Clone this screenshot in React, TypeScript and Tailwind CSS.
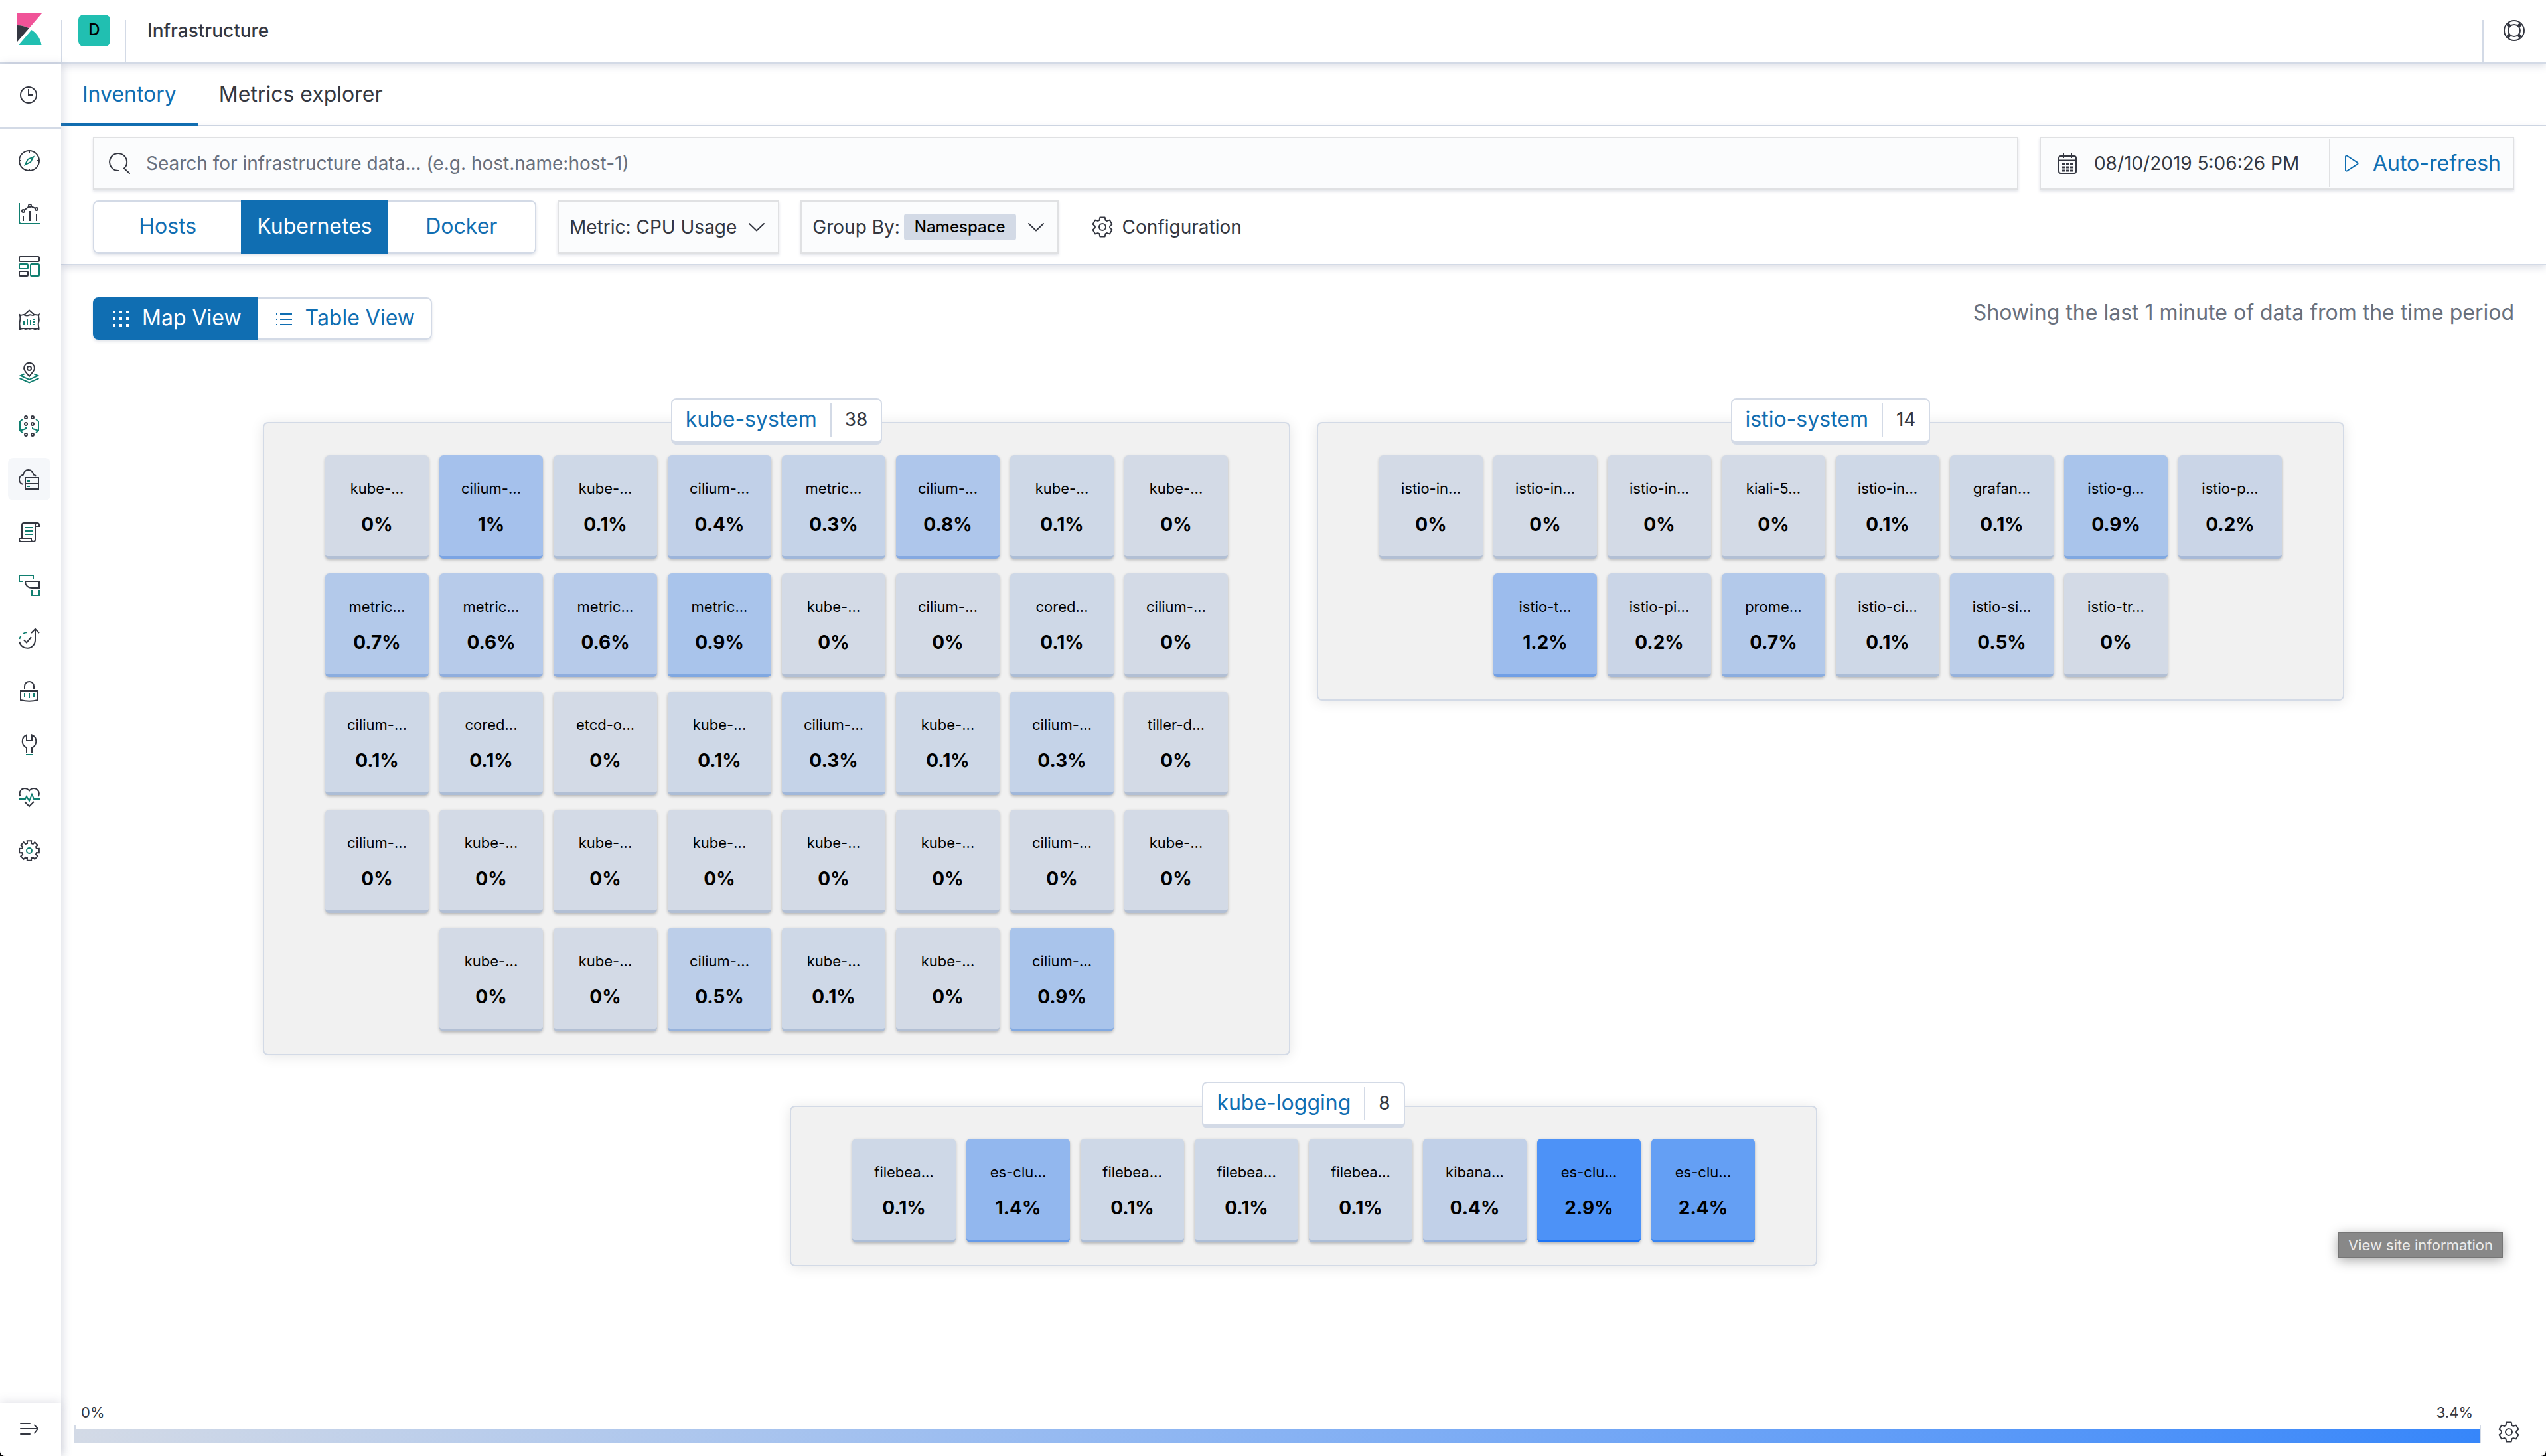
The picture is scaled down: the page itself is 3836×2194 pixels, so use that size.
import type { ReactNode } from "react";

type Pod = [name: string, value: number];

const GROUPS: { name: string; pods: Pod[] }[] = [
  {
    name: "kube-system",
    pods: [
      ["kube-...", 0], ["cilium-...", 1], ["kube-...", 0.1], ["cilium-...", 0.4], ["metric...", 0.3], ["cilium-...", 0.8], ["kube-...", 0.1], ["kube-...", 0],
      ["metric...", 0.7], ["metric...", 0.6], ["metric...", 0.6], ["metric...", 0.9], ["kube-...", 0], ["cilium-...", 0], ["cored...", 0.1], ["cilium-...", 0],
      ["cilium-...", 0.1], ["cored...", 0.1], ["etcd-o...", 0], ["kube-...", 0.1], ["cilium-...", 0.3], ["kube-...", 0.1], ["cilium-...", 0.3], ["tiller-d...", 0],
      ["cilium-...", 0], ["kube-...", 0], ["kube-...", 0], ["kube-...", 0], ["kube-...", 0], ["kube-...", 0], ["cilium-...", 0], ["kube-...", 0],
      ["kube-...", 0], ["kube-...", 0], ["cilium-...", 0.5], ["kube-...", 0.1], ["kube-...", 0], ["cilium-...", 0.9],
    ],
  },
  {
    name: "istio-system",
    pods: [
      ["istio-in...", 0], ["istio-in...", 0], ["istio-in...", 0], ["kiali-5...", 0], ["istio-in...", 0.1], ["grafan...", 0.1], ["istio-g...", 0.9], ["istio-p...", 0.2],
      ["istio-t...", 1.2], ["istio-pi...", 0.2], ["prome...", 0.7], ["istio-ci...", 0.1], ["istio-si...", 0.5], ["istio-tr...", 0],
    ],
  },
  {
    name: "kube-logging",
    pods: [
      ["filebea...", 0.1], ["es-clu...", 1.4], ["filebea...", 0.1], ["filebea...", 0.1], ["filebea...", 0.1], ["kibana...", 0.4], ["es-clu...", 2.9], ["es-clu...", 2.4],
    ],
  },
];

const MAX = 3.4;
const LOW = [211, 218, 230];
const HIGH = [54, 134, 250];

function heat(value: number) {
  return LOW.map((c, i) => Math.round(c + (HIGH[i] - c) * (value / MAX)));
}

/* Same hue and saturation with the HSL lightness lowered by ten points. */
function darken(rgb: number[]) {
  const [r, g, b] = rgb.map((c) => c / 255);
  const max = Math.max(r, g, b);
  const min = Math.min(r, g, b);
  const l = (max + min) / 2;
  const d = max - min;
  const s = d / (1 - Math.abs(2 * l - 1));
  const h = 60 * (4 + (r - g) / d);
  return `hsl(${h} ${s * 100}% ${l * 100 - 10}%)`;
}

/* Outline of a cog with flat teeth, centred in a 32 by 32 box. */
function cog(teeth: number, outer: number, inner: number, a: number, b: number, start: number) {
  const pts: string[] = [];
  for (let i = 0; i < teeth; i++) {
    const mid = start + (360 / teeth) * i;
    for (const [r, off] of [[inner, -b], [outer, -a], [outer, a], [inner, b]]) {
      const t = ((mid + off) * Math.PI) / 180;
      pts.push(`${(16 + r * Math.cos(t)).toFixed(2)} ${(16 + r * Math.sin(t)).toFixed(2)}`);
    }
  }
  return `M${pts.join("L")}Z`;
}

function Icon({ children, className = "" }: { children: ReactNode; className?: string }) {
  return (
    <svg viewBox="0 0 32 32" className={`size-8 shrink-0 ${className}`} fill="none" stroke="currentColor" strokeWidth="2" aria-hidden="true">
      {children}
    </svg>
  );
}

const TEAL = "#117f70";

const NAV: { label: string; icon: ReactNode }[] = [
  {
    label: "Discover",
    icon: (
      <>
        <circle cx="16" cy="16" r="15" />
        <path d="M16 1V4M16 28V31M1 16H4M28 16H31" />
        <path stroke={TEAL} d="M22 10.5L13.8 14L10 22L18 18.2Z" />
      </>
    ),
  },
  {
    label: "Visualize",
    icon: (
      <>
        <path stroke={TEAL} d="M1 0V28A3 3 0 0 0 4 31H32" />
        <circle cx="7" cy="12" r="2" />
        <circle cx="17" cy="4" r="2" />
        <circle cx="27" cy="9" r="2" />
        <path d="M8.7 10.7L15.4 5.3M18.7 5L25.2 8M7 20V27M17 12V27M27 17V27" />
      </>
    ),
  },
  {
    label: "Dashboard",
    icon: (
      <>
        <rect x="1" y="1" width="30" height="7" rx="1.5" />
        <rect x="1" y="23" width="13" height="7" rx="1.5" />
        <rect x="1" y="12" width="13" height="7" rx="1.5" stroke={TEAL} />
        <rect x="18" y="12" width="13" height="18" rx="1.5" stroke={TEAL} />
      </>
    ),
  },
  {
    label: "Canvas",
    icon: (
      <>
        <path d="M8 8.5L16 1.5L24 8.5" />
        <path d="M1.5 8C5 10 6 7 9 8.5S14 9.5 16 8.5S21 10 23 8.5S28 9.5 30.5 8C29 12 32 14 30.3 19S31 26 30.5 30C27 28.5 26 31 23 29.5S18 30.5 16 29.5S11 31 9 29.5S4 30 1.5 30C3 26 .5 24 1.7 19S3 12 1.5 8Z" />
        <path stroke={TEAL} d="M8 17V24M13 14V24M18 16V24M22 15H25M22 19H25M22 23H25" />
      </>
    ),
  },
  {
    label: "Maps",
    icon: (
      <>
        <path d="M16 21C12 16 8 12.5 8 8.8A8 8 0 0 1 24 8.8C24 12.5 20 16 16 21Z" />
        <circle cx="16" cy="9" r="3" />
        <path stroke={TEAL} d="M8.5 17.5L3 20L16 26L29 20L23.5 17.5M1.5 24L16 30.5L30.5 24" />
      </>
    ),
  },
  {
    label: "Machine Learning",
    icon: (
      <>
        {[3, 13, 29].map((y) => (
          <g key={y}>
            <circle cx="11" cy={y} r="2" />
            <circle cx="21" cy={y} r="2" />
          </g>
        ))}
        <path stroke={TEAL} d="M6 6L2 9V23L6 26M2 23L11 20V18M26 6L30 9V23L26 26M30 23L21 20V18" />
      </>
    ),
  },
  {
    label: "Infrastructure",
    icon: (
      <>
        <path d="M7 24C2.5 23 1 19.5 1 16.5C1 13 3.5 10 7 9.5C8 4.5 10.5 2 14.5 2S21.5 5 22.5 9.5C24 9.5 25.5 10.5 26.5 12" />
        <path d="M10 14H30V31H10ZM10 23H30" />
        <path stroke={TEAL} d="M12.5 19H17M12.5 27H17" />
      </>
    ),
  },
  {
    label: "Logs",
    icon: (
      <>
        <path d="M5 24V5A3 3 0 0 1 8 2H28A3 3 0 0 1 31 5V7H25" />
        <path d="M28 2A3 3 0 0 0 25 5V27A3 3 0 0 1 22 30H4A3 3 0 0 1 1 27V25H19V27A3 3 0 0 0 22 30" />
        <path stroke={TEAL} d="M9 9H21M9 14H21M9 19H21" />
      </>
    ),
  },
  {
    label: "APM",
    icon: (
      <>
        <path stroke={TEAL} d="M7 10H1V1H22V7M20 23V31H31V23" />
        <path d="M10 10H31V20H20C14 20 10 16 10 10Z" />
      </>
    ),
  },
  {
    label: "Uptime",
    icon: (
      <>
        <path d="M1.2 21A12 12 0 0 0 25 19V2M19 8L25 2L31 8M8 18.5L12 22.5L19 14" />
        <path stroke={TEAL} d="M1.3 17A12 12 0 0 1 3.5 12.5M6.5 9.3A12 12 0 0 1 13 7" />
      </>
    ),
  },
  {
    label: "SIEM",
    icon: (
      <>
        <path d="M9 12V8A7 7 0 0 1 23 8V12M3 15H29V29Q16 32.500 3 29Z" />
        <path stroke={TEAL} d="M9 18V24M16 18V26M23 18V24" />
      </>
    ),
  },
  {
    label: "Dev Tools",
    icon: (
      <>
        <path d="M12 28V20.500A10.300 10.300 0 0 1 12 1.500V10H20V1.500A10.300 10.300 0 0 1 20 20.500V28" />
        <path stroke={TEAL} d="M11 31H21" />
      </>
    ),
  },
  {
    label: "Stack Monitoring",
    icon: (
      <>
        <path d="M2.500 14C-.5 6 5 2 9 2C12 2 14.500 3.500 16 5.500C17.500 3.500 20 2 23 2C28 2 33 7 29.800 14M9 22L16 29L23 22" />
        <path stroke={TEAL} d="M0 18H10L12 14L16 21L20 11L23 18H32" />
      </>
    ),
  },
  {
    label: "Management",
    icon: (
      <>
        <path d={cog(8, 15.2, 11.4, 12, 15, 0)} />
        <circle cx="16" cy="16" r="4" stroke={TEAL} />
      </>
    ),
  },
];

function GearIcon() {
  return (
    <Icon>
      <path strokeLinejoin="round" d={cog(6, 15, 11.2, 14, 24, 90)} />
      <circle cx="16" cy="16" r="5" />
    </Icon>
  );
}

function ChevronIcon() {
  return (
    <Icon>
      <path strokeLinecap="round" strokeLinejoin="round" d="M5 11L16 21.500L27 11" />
    </Icon>
  );
}

function Header() {
  return (
    <header className="relative z-10 flex h-24 shrink-0 items-center border-b-2 border-[#d3dae6] bg-white shadow-[0_4px_10px_rgba(110,120,150,0.22)]">
      <a href="#home" aria-label="Kibana home" className="flex w-[92px] self-stretch pt-5 pl-[26px]">
        <svg viewBox="0 0 37 48" className="h-12 w-[37px]" aria-hidden="true">
          <path fill="#f05398" d="M0 0H37L17.700 22.500A36 36 0 0 0 0 18Z" />
          <path fill="#343741" d="M0 18A36 36 0 0 1 17.700 22.500L0 43Z" />
          <path fill="#21bfb1" d="M2 48L21.500 25C30 30.500 35 38.500 36.500 48Z" />
        </svg>
      </a>
      <span className="h-16 w-0.5 self-end bg-[#d3dae6]" />
      <button type="button" aria-label="Default space" className="flex w-[94px] self-stretch pt-[22px] pl-6">
        <span className="flex size-12 items-center justify-center rounded-lg bg-[#21bfb1] pb-0.5 text-2xl font-medium text-black">D</span>
      </button>
      <span className="h-16 w-0.5 self-end bg-[#d3dae6]" />
      <h1 className="flex-1 pb-0.5 pl-8 text-[28px] font-medium">Infrastructure</h1>
      <span className="h-16 w-0.5 self-end bg-[#d3dae6]" />
      <button type="button" aria-label="Help" className="pr-8 pb-0.5 pl-[30px]">
        <Icon>
          <circle cx="16" cy="16" r="15" />
          <circle cx="16" cy="16" r="9" />
          <path strokeWidth="5" d="M9.600 9.600L6 6M22.400 9.600L26 6M9.600 22.400L6 26M22.400 22.400L26 26" />
        </Icon>
      </button>
    </header>
  );
}

function SideNav() {
  return (
    <aside className="relative z-20 flex w-[92px] shrink-0 flex-col bg-white shadow-[4px_0_12px_rgba(110,120,150,0.2)]">
      <div className="flex h-[98px] items-center border-b-2 border-[#d3dae6] pb-0.5 pl-[27px]">
        <button type="button" aria-label="Recently viewed">
          <Icon>
            <circle cx="16" cy="16" r="12" />
            <path d="M16 7V16H23" />
          </Icon>
        </button>
      </div>
      <nav aria-label="Applications" className="flex flex-col gap-4 py-4 pl-3">
        {NAV.map((item) => (
          <a
            key={item.label}
            href={`#${item.label.toLowerCase().replace(" ", "-")}`}
            aria-label={item.label}
            aria-current={item.label === "Infrastructure" ? "page" : undefined}
            className="flex size-16 items-center justify-center rounded-lg aria-[current=page]:bg-[#f5f7fa]"
          >
            <Icon>{item.icon}</Icon>
          </a>
        ))}
      </nav>
      <button type="button" aria-label="Expand navigation" className="mt-auto flex h-20 items-center pl-7 shadow-[0_-2px_14px_rgba(110,110,140,0.2)]">
        <Icon>
          <path strokeLinecap="round" strokeLinejoin="round" d="M3 7H17M3 15H29M3 23H17M24 9.500L29 15L24 21.500" />
        </Icon>
      </button>
    </aside>
  );
}

function Toolbar() {
  return (
    <div className="flex flex-col gap-4 border-b-2 border-[#d3dae6] px-12 py-4 shadow-[0_4px_10px_rgba(110,120,150,0.22)]">
      <div className="flex h-20 gap-8">
        <label className="flex flex-1 items-center gap-6 border-2 border-[#e0e1e3] bg-[#fbfcfd] pl-[22px] shadow-[0_3px_4px_rgba(110,120,150,0.2)]">
          <Icon>
            <path strokeLinecap="round" d="M14.500 27A13 13 0 1 1 23 23.500L31 31" />
          </Icon>
          <input
            type="search"
            aria-label="Search for infrastructure data"
            placeholder="Search for infrastructure data... (e.g. host.name:host-1)"
            className="h-full flex-1 bg-transparent text-[28px] outline-none placeholder:text-[#69707d]"
          />
        </label>
        <div className="flex border-2 border-[#e0e1e3] bg-[#fbfcfd] shadow-[0_3px_4px_rgba(110,120,150,0.2)]">
          <button type="button" className="flex w-[434px] items-center gap-6 pl-6 text-[28px]">
            <Icon>
              <rect x="3" y="5" width="26" height="26" rx="3" />
              <path d="M3 11.500H29M10 1V8M22 1V8" />
              <path strokeWidth="3" strokeDasharray="4 2" d="M8 17H24M8 22H24M8 27H24" />
            </Icon>
            08/10/2019 5:06:26 PM
          </button>
          <button type="button" className="my-0.5 flex items-center gap-4 border-l-2 border-[#e0e1e3] pr-[18px] pl-4 text-[32px] text-[#106eb2]">
            <Icon>
              <path strokeLinejoin="round" d="M7 5.500A1.500 1.500 0 0 1 9 4.500L25 14.800A1.500 1.500 0 0 1 25 17.200L9 27.500A1.500 1.500 0 0 1 7 26.500Z" />
            </Icon>
            Auto-refresh
          </button>
        </div>
      </div>
      <div className="flex h-20 gap-8">
        <div role="group" aria-label="Node type" className="flex w-[668px] rounded-lg text-[32px] text-[#106eb2] shadow-[0_3px_4px_rgba(110,120,150,0.2)]">
          <button type="button" className="flex-1 rounded-l-lg border-2 border-r-0 border-[#d3dae6] pb-0.5">Hosts</button>
          <button type="button" aria-pressed="true" className="flex-1 bg-[#106eb2] pb-0.5 text-white">Kubernetes</button>
          <button type="button" className="flex-1 rounded-r-lg border-2 border-l-0 border-[#d3dae6] pb-0.5">Docker</button>
        </div>
        <button type="button" aria-haspopup="menu" className="flex items-center gap-3.5 border-2 border-[#e0e1e3] bg-[#fbfcfd] px-4 text-[28px] shadow-[0_3px_4px_rgba(110,120,150,0.2)]">
          Metric: CPU Usage
          <ChevronIcon />
        </button>
        <button type="button" aria-haspopup="menu" className="flex items-center gap-3.5 border-2 border-[#e0e1e3] bg-[#fbfcfd] px-4 text-[28px] shadow-[0_3px_4px_rgba(110,120,150,0.2)]">
          <span className="flex items-center gap-1.5">
            Group By:
            <span className="flex h-10 items-center rounded bg-[#d3dae6] px-4 text-2xl font-medium text-black">Namespace</span>
          </span>
          <ChevronIcon />
        </button>
        <button type="button" className="flex items-center gap-3.5 px-[18px] text-[28px]">
          <GearIcon />
          Configuration
        </button>
      </div>
    </div>
  );
}

function PodTile({ name, value }: { name: string; value: number }) {
  const rgb = heat(value);
  return (
    <button
      type="button"
      style={{ backgroundColor: `rgb(${rgb.join(" ")})`, borderColor: darken(rgb) }}
      className="flex size-[156px] flex-col items-center justify-center rounded-md border-b-4 pt-0.5 text-black shadow-[0_2px_4px_rgba(0,0,0,0.25)]"
    >
      <span className="text-[22px] leading-[54px]">{name}</span>
      <span className="text-[28px] leading-[54px] font-bold">{value}%</span>
    </button>
  );
}

function Group({ name, pods }: { name: string; pods: Pod[] }) {
  return (
    <section aria-label={name} className="flex w-[1548px] flex-col items-center self-start">
      <div className="z-[1] -mb-[34px] flex h-[70px] items-center rounded-lg border-2 border-b-[6px] border-[#d3dae6] bg-white">
        <a href={`#${name}`} className="px-5 pb-0.5 text-[32px] text-[#106eb2]">{name}</a>
        <span className="h-[50px] border-l-2 border-[#d3dae6] px-5 text-[28px] leading-[48px]">{pods.length}</span>
      </div>
      <div className="flex w-full flex-wrap justify-center gap-x-4 gap-y-[22px] rounded-lg border-2 border-[#d3dae6] bg-[#f1f1f1] px-20 pt-12 pb-[34px] shadow-[0_2px_20px_rgba(0,0,0,0.1)]">
        {pods.map(([pod, value], i) => (
          <PodTile key={i} name={pod} value={value} />
        ))}
      </div>
    </section>
  );
}

function Legend() {
  return (
    <footer className="mt-auto flex items-end gap-[26px] pr-10 pb-5 pl-5">
      <div className="flex-1">
        <div className="flex justify-between pr-3 pb-1 pl-2.5 text-[22px] leading-8">
          <span>0%</span>
          <span>3.4%</span>
        </div>
        <div className="flex h-[26px] items-end border-x-2 border-[#d3dae6]">
          <div className="-ml-0.5 h-5 flex-1 bg-linear-to-r from-[#d3dae6] to-[#3686fa]" />
        </div>
      </div>
      <button type="button" aria-label="Legend options">
        <GearIcon />
      </button>
    </footer>
  );
}

export default function App() {
  return (
    <div className="bg-black font-['Inter',sans-serif] text-[#343741]">
      <div className="relative flex min-h-screen flex-col overflow-hidden rounded-b-lg bg-white">
        <Header />
        <div className="flex flex-1">
          <SideNav />
          <main className="flex min-w-0 flex-1 flex-col">
            <nav aria-label="Sections" className="flex border-b-2 border-[#d3dae6] text-[32px] leading-[48px]">
              <a href="#inventory" aria-current="page" className="-mb-0.5 border-b-4 border-[#106eb2] px-8 pt-[22px] pb-5 text-[#106eb2]">Inventory</a>
              <a href="#metrics-explorer" className="px-8 pt-[22px]">Metrics explorer</a>
            </nav>
            <Toolbar />
            <div className="flex justify-between px-12 pt-12">
              <div role="group" aria-label="View" className="flex h-16 rounded-lg text-[32px] shadow-[0_3px_4px_rgba(110,120,150,0.2)]">
                <button type="button" aria-pressed="true" className="flex items-center gap-4 rounded-l-lg bg-[#106eb2] pr-6 pl-[26px] text-white">
                  <Icon>
                    <path strokeWidth="4" strokeDasharray="4 6" d="M4 6H28M4 16H28M4 26H28" />
                  </Icon>
                  <span className="pb-0.5">Map View</span>
                </button>
                <button type="button" className="flex items-center gap-4 rounded-r-lg border-2 border-l-0 border-[#d3dae6] px-6 text-[#106eb2]">
                  <Icon>
                    <path d="M4 9H6M10 9H28M4 17H6M10 17H28M4 25H6M10 25H28" />
                  </Icon>
                  <span className="pb-0.5">Table View</span>
                </button>
              </div>
              <p className="text-[32px] leading-[46px] text-[#69707d]">Showing the last 1 minute of data from the time period</p>
            </div>
            <div className="flex flex-wrap justify-center gap-10 pt-[88px] pb-12">
              {GROUPS.map((g) => (
                <Group key={g.name} {...g} />
              ))}
            </div>
            <Legend />
          </main>
        </div>
        <div role="tooltip" className="absolute right-[65px] bottom-[299px] border border-[#767676] bg-[#888] px-3.5 text-[22px] leading-9 text-[#ececec] shadow-[0_4px_18px_rgba(0,0,0,0.35)]">
          View site information
        </div>
      </div>
    </div>
  );
}
